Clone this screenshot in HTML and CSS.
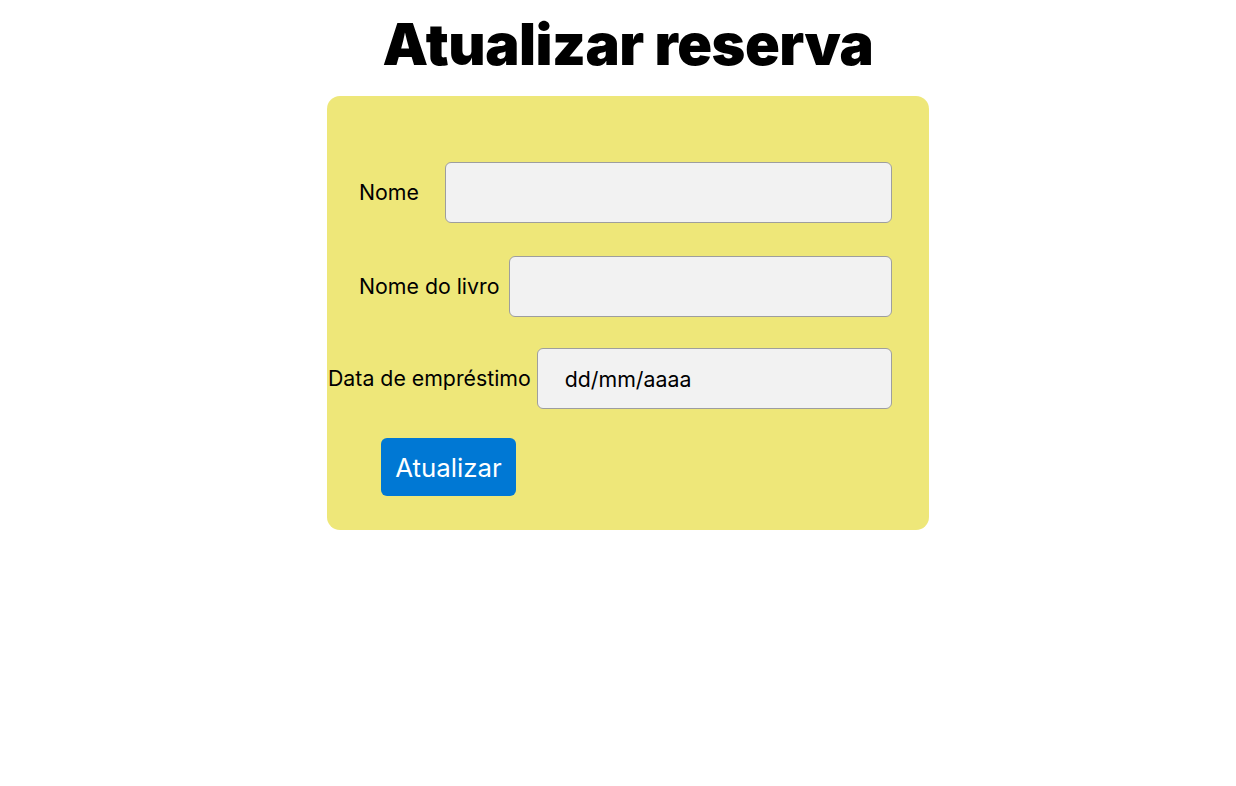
FILE: index.html
```html
<!DOCTYPE html>
<html lang="pt">
<head>
<meta charset="utf-8">
<title>Atualizar reserva</title>
<link rel="stylesheet" href="styles.css">
</head>
<body>
<main class="page">
  <h1 class="title">Atualizar reserva</h1>
  <form class="card">
    <div class="row row-nome">
      <label class="label" for="nome">Nome</label>
      <input class="field" id="nome" type="text">
    </div>
    <div class="row row-livro">
      <label class="label" for="livro">Nome do livro</label>
      <input class="field" id="livro" type="text">
    </div>
    <div class="row row-data">
      <label class="label" for="data">Data de empréstimo</label>
      <input class="field field-date" id="data" type="text" value="dd/mm/aaaa">
    </div>
    <div class="actions">
      <button class="btn" type="button">Atualizar</button>
    </div>
  </form>
</main>
</body>
</html>
```

FILE: styles.css
```css
html, body {
  margin: 0;
  padding: 0;
  background: #ffffff;
}

body {
  font-family: Inter, "Noto Sans", sans-serif;
  color: #000;
}

.page {
  display: flex;
  flex-direction: column;
  align-items: center;
  padding-left: 20px;
}

.title {
  margin: 9px 0 0 0;
  font-size: 57.5px;
  line-height: 70px;
  font-weight: 900;
  letter-spacing: -0.5px;
  height: 87px;
}

.card {
  width: 602px;
  box-sizing: border-box;
  background: #eee779;
  border-radius: 13px;
  padding: 66px 37px 34px 0;
  display: flex;
  flex-direction: column;
}

.row {
  display: flex;
  align-items: center;
  height: 61px;
}

.row-nome {
  padding-left: 32px;
  margin-bottom: 33px;
}
.row-nome .label { margin-right: 26px; }

.row-livro {
  padding-left: 32px;
  margin-bottom: 31px;
}
.row-livro .label { margin-right: 10px; }

.row-data {
  padding-left: 1px;
  margin-bottom: 29px;
}
.row-data .label { margin-right: 6px; }

.label {
  font-size: 21.3px;
  white-space: nowrap;
  padding-bottom: 2px;
}

.field {
  flex: 1;
  min-width: 0;
  height: 61px;
  box-sizing: border-box;
  border: 1.5px solid #9e9e9e;
  border-radius: 6px;
  background: #f2f2f2;
  font-family: Inter, "Noto Sans", sans-serif;
  font-size: 21.3px;
  color: #000;
  padding: 0 0 0 27px;
  outline: none;
}

.actions {
  padding-left: 54px;
  display: flex;
}

.btn {
  width: 135px;
  height: 58px;
  border: none;
  border-radius: 6px;
  background: #0078d4;
  color: #fff;
  font-family: Inter, "Noto Sans", sans-serif;
  font-size: 25.8px;
  padding: 0;
}
```
